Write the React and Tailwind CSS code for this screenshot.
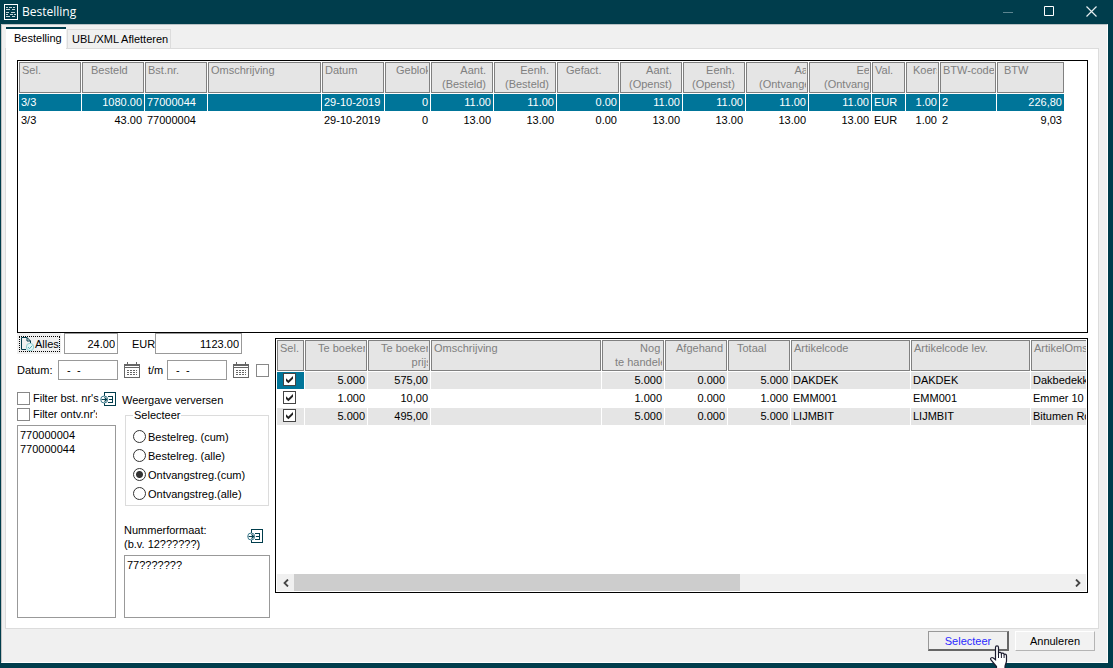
import clsx from 'clsx'

const orderColumns = [
  { key: 'sel', lines: ['Sel.'], width: 'w-[62px]', pad: 'pl-0.5' },
  { key: 'ordered', lines: ['Besteld'], width: 'w-[62px]', pad: 'pl-2', right: true },
  { key: 'number', lines: ['Bst.nr.'], width: 'w-[62px]', pad: 'pl-0.5' },
  { key: 'description', lines: ['Omschrijving'], width: 'w-[113px]', pad: 'pl-0.5' },
  { key: 'date', lines: ['Datum'], width: 'w-[62px]', pad: 'pl-0.5' },
  { key: 'blocked', lines: ['Geblok'], width: 'w-[45px]', pad: 'pl-2.5', right: true },
  { key: 'qtyOrdered', lines: ['Aant.', '(Besteld)'], width: 'w-[62px]', pad: 'pl-2.5', right: true },
  { key: 'unitOrdered', lines: ['Eenh.', '(Besteld)'], width: 'w-[62px]', pad: 'pl-2.5', right: true },
  { key: 'invoiced', lines: ['Gefact.'], width: 'w-[62px]', pad: 'pl-2', right: true },
  { key: 'qtyOpen', lines: ['Aant.', '(Openst)'], width: 'w-[62px]', pad: 'pl-2', right: true },
  { key: 'unitOpen', lines: ['Eenh.', '(Openst)'], width: 'w-[62px]', pad: 'pl-2', right: true },
  { key: 'qtyReceived', lines: ['Aant.', '(Ontvangen)'], width: 'w-[62px]', pad: 'pl-3', right: true },
  { key: 'unitReceived', lines: ['Eenh.', '(Ontvangen)'], width: 'w-[62px]', pad: 'pl-3.5', right: true },
  { key: 'currency', lines: ['Val.'], width: 'w-[33px]', pad: 'pl-0.5' },
  { key: 'rate', lines: ['Koers'], width: 'w-[33px]', pad: 'pl-1.5', right: true },
  { key: 'vatCode', lines: ['BTW-code'], width: 'w-[56px]', pad: 'pl-0.5' },
  { key: 'vat', lines: ['BTW'], width: 'w-[67px]', pad: 'pl-1.5', right: true },
]

const orders = [
  {
    sel: '3/3', ordered: '1080.00', number: '77000044', description: '', date: '29-10-2019', blocked: '0',
    qtyOrdered: '11.00', unitOrdered: '11.00', invoiced: '0.00', qtyOpen: '11.00', unitOpen: '11.00',
    qtyReceived: '11.00', unitReceived: '11.00', currency: 'EUR', rate: '1.00', vatCode: '2', vat: '226,80',
  },
  {
    sel: '3/3', ordered: '43.00', number: '77000004', description: '', date: '29-10-2019', blocked: '0',
    qtyOrdered: '13.00', unitOrdered: '13.00', invoiced: '0.00', qtyOpen: '13.00', unitOpen: '13.00',
    qtyReceived: '13.00', unitReceived: '13.00', currency: 'EUR', rate: '1.00', vatCode: '2', vat: '9,03',
  },
]

const lineColumns = [
  { key: 'sel', lines: ['Sel.'], width: 'w-[27px]', pad: 'pl-0.5' },
  { key: 'toBook', lines: ['Te boeken'], width: 'w-[62px]', pad: 'pl-3', right: true },
  { key: 'price', lines: ['Te boeken', 'prijs'], width: 'w-[62px]', pad: 'pl-3', right: true },
  { key: 'description', lines: ['Omschrijving'], width: 'w-[170px]', pad: 'pl-0.5' },
  { key: 'open', lines: ['Nog  ', 'te handele'], width: 'w-[62px]', pad: 'pl-3', right: true },
  { key: 'handled', lines: ['Afgehand'], width: 'w-[62px]', pad: 'pl-2.5', right: true },
  { key: 'total', lines: ['Totaal'], width: 'w-[62px]', pad: 'pl-2', right: true },
  { key: 'code', lines: ['Artikelcode'], width: 'w-[119px]', pad: 'pl-0.5' },
  { key: 'supplierCode', lines: ['Artikelcode lev.'], width: 'w-[119px]', pad: 'pl-0.5' },
  { key: 'name', lines: ['ArtikelOmschrijving'], width: 'w-[119px]', pad: 'pl-0.5' },
]

const orderLines = [
  { toBook: '5.000', price: '575,00', description: '', open: '5.000', handled: '0.000', total: '5.000', code: 'DAKDEK', supplierCode: 'DAKDEK', name: 'Dakbedekking' },
  { toBook: '1.000', price: '10,00', description: '', open: '1.000', handled: '0.000', total: '1.000', code: 'EMM001', supplierCode: 'EMM001', name: 'Emmer 10 L' },
  { toBook: '5.000', price: '495,00', description: '', open: '5.000', handled: '0.000', total: '5.000', code: 'LIJMBIT', supplierCode: 'LIJMBIT', name: 'Bitumen Rol' },
]

const viewModes = ['Bestelreg. (cum)', 'Bestelreg. (alle)', 'Ontvangstreg.(cum)', 'Ontvangstreg.(alle)']

const cellClass = 'h-[17px] overflow-hidden px-0.5 pt-px pb-0 align-top whitespace-nowrap'

function GridHead({ columns }) {
  return (
    <thead>
      <tr>
        {columns.map((col) => (
          <th
            key={col.key}
            className={clsx('h-[31px] overflow-hidden border border-[#808080] bg-[#e5e5e5] p-0 text-left align-top font-normal text-[#808080]', col.width)}
          >
            <div className="mr-px overflow-hidden">
              <div className={clsx('w-max whitespace-pre', col.right && 'text-right', col.pad)}>
                {col.lines.map((line) => (
                  <div key={line}>{line}</div>
                ))}
              </div>
            </div>
          </th>
        ))}
      </tr>
    </thead>
  )
}

function Checkbox({ className, ...props }) {
  return (
    <span className={clsx('relative block size-[13px] shrink-0', className)}>
      <input type="checkbox" className="peer block size-[13px] appearance-none border border-[#888] bg-white checked:border-[#444]" {...props} />
      <svg viewBox="0 0 13 13" className="pointer-events-none absolute inset-0 hidden size-[13px] peer-checked:block">
        <path d="M3 5.2 5.4 7.6 10 3v2.7L5.4 10.3 3 7.9z" fill="#222" />
      </svg>
    </span>
  )
}

function CalendarIcon() {
  return (
    <svg viewBox="0 0 16 16" className="size-4" fill="none" stroke="#666" shapeRendering="crispEdges">
      <path d="M.5 2.5h15v13H.5zM0 5.5h16M3.5 0v4M12.5 0v4M1 3.5h14" />
      <path d="M3 8.5h10M3 10.5h10M3 12.5h10" strokeDasharray="2 1" />
    </svg>
  )
}

function RefreshListIcon() {
  return (
    <svg viewBox="0 0 16 16" className="size-4" fill="none" stroke="#003d4c">
      <path d="M4 4V.5h11.5v13H4V11" shapeRendering="crispEdges" />
      <path d="M8 4.5h4.500v6H8M9 7.5h3.500" shapeRendering="crispEdges" />
      <circle cx="4.2" cy="7.5" r="3.5" fill="#fff" stroke="#39788a" />
      <path d="M1.5 7.5h5M4.5 5.3 6.7 7.5 4.5 9.7" strokeWidth="1.2" />
    </svg>
  )
}

function TitleBar() {
  return (
    <header className="flex h-6 items-center bg-[#003d4c] pl-1 text-white">
      <svg viewBox="0 0 14 16" className="h-4 w-3.5" fill="none" stroke="#fff" shapeRendering="crispEdges">
        <path d="M.5.5h13v15H.5z" />
        <path d="M2 3.5h2M5 3.5h3M9 3.5h2M2 5.5h4M8 5.5h3M2 8.5h3M7 8.5h4M2 10.5h2M6 10.5h3M10 10.5h2M2 12.5h4M8 12.5h3" stroke="#c5d5d9" />
      </svg>
      <h1 className="ml-1 flex-1 font-['Open_Sans',sans-serif] text-xs">Bestelling</h1>
      <button type="button" aria-label="Minimaliseren" className="flex h-5 w-[42px] justify-center">
        <svg viewBox="0 0 11 11" className="mt-1 size-[11px]" stroke="#5d8590"><path d="M0 6.5h10" /></svg>
      </button>
      <button type="button" aria-label="Maximaliseren" className="flex h-5 w-10 justify-center">
        <svg viewBox="0 0 11 11" className="mt-1 size-[11px]" fill="none" stroke="#fff"><path d="M.5.5h9v9h-9z" /></svg>
      </button>
      <button type="button" aria-label="Sluiten" className="flex h-5 w-11 justify-center">
        <svg viewBox="0 0 11 11" className="mt-1 size-[11px]" stroke="#e6eef0" strokeWidth="1.2"><path d="M.5.5l10 10M10.5.5l-10 10" /></svg>
      </button>
    </header>
  )
}

function OrderGrid() {
  return (
    <div className="h-[273px] overflow-hidden border border-black">
      <table className="w-0 table-fixed border-separate border-spacing-px">
        <GridHead columns={orderColumns} />
        <tbody>
          {orders.map((order, i) => (
            <tr key={order.number} className={i === 0 ? 'bg-[#007599] text-white' : 'bg-white'}>
              {orderColumns.map((col) => (
                <td key={col.key} className={clsx(cellClass, col.right && 'text-right')}>
                  {order[col.key]}
                </td>
              ))}
            </tr>
          ))}
        </tbody>
      </table>
    </div>
  )
}

function LineGrid() {
  return (
    <div className="mt-[5px] flex h-[255px] min-w-0 flex-1 flex-col border border-black pr-px pb-px">
      <div className="min-h-0 flex-1 overflow-hidden">
        <table className="w-0 table-fixed border-separate border-spacing-px">
          <GridHead columns={lineColumns} />
          <tbody>
            {orderLines.map((line, i) => (
              <tr key={line.code} className={i % 2 === 0 ? 'bg-[#e5e5e5]' : 'bg-white'}>
                <td className={clsx('h-[17px] px-1.5 pt-px pb-0 align-top', i === 0 && 'bg-[#007599]')}>
                  <Checkbox defaultChecked aria-label={`Selecteer ${line.code}`} />
                </td>
                {lineColumns.slice(1).map((col) => (
                  <td key={col.key} className={clsx(cellClass, col.right && 'text-right')}>
                    {line[col.key]}
                  </td>
                ))}
              </tr>
            ))}
          </tbody>
        </table>
      </div>
      <div className="ml-px flex h-[17px] bg-[#f0f0f0]">
        <button type="button" aria-label="Naar links" className="flex w-[17px] items-center justify-center">
          <svg viewBox="0 0 8 8" className="size-2" fill="none" stroke="#444" strokeWidth="1.8"><path d="M6 .5 2.5 4 6 7.5" /></svg>
        </button>
        <div className="flex-1">
          <div className="h-full w-[57.5%] bg-[#cdcdcd]" />
        </div>
        <button type="button" aria-label="Naar rechts" className="flex w-[17px] items-center justify-center">
          <svg viewBox="0 0 8 8" className="size-2" fill="none" stroke="#444" strokeWidth="1.8"><path d="M2 .5 5.5 4 2 7.5" /></svg>
        </button>
      </div>
    </div>
  )
}

function FilterPanel() {
  return (
    <div className="w-[258px] shrink-0">
      <div className="flex h-[21px] items-center">
        <button type="button" className="flex h-[21px] w-11 items-center overflow-hidden bg-[#f0f0f0] pl-0.5">
          <span className="flex h-4 w-[41px] items-center border border-dotted border-black">
            <svg viewBox="0 0 15 16" className="h-4 w-[15px] shrink-0" fill="none" stroke="#003d4c">
              <path d="M6 13.5H1.5V1.5H7L10.5 5v2M7 1.5V5h3.5" />
              <circle cx="10" cy="11" r="3.7" fill="#e4f5f5" stroke="#8fcfd2" />
              <path d="M8 11l1.500 1.700 2.700-3" stroke="#4fb0b6" />
            </svg>
            Alles
          </span>
        </button>
        <input type="text" aria-label="Aantal" defaultValue="24.00" className="ml-[3px] h-[21px] w-[54px] border border-[#999] bg-white px-0.5 text-right" />
        <label htmlFor="amount" className="ml-3.5 w-[23px]">EUR</label>
        <input id="amount" type="text" defaultValue="1123.00" className="h-[21px] w-[87px] border border-[#999] bg-white px-0.5 text-right" />
      </div>

      <div className="mt-1.5 flex h-5 items-center">
        <label htmlFor="date-from" className="w-[41px]">Datum:</label>
        <input id="date-from" type="text" defaultValue="  -  -" className="h-5 w-[60px] border border-[#999] bg-white px-0.5" />
        <button type="button" aria-label="Kies begindatum" className="ml-1.5"><CalendarIcon /></button>
        <label htmlFor="date-to" className="ml-2 w-[19px]">t/m</label>
        <input id="date-to" type="text" defaultValue="  -  -" className="h-5 w-[60px] border border-[#999] bg-white px-0.5" />
        <button type="button" aria-label="Kies einddatum" className="ml-1.5"><CalendarIcon /></button>
        <Checkbox className="ml-[7px]" aria-label="Datumfilter" />
      </div>

      <div className="mt-3 flex h-4 items-start">
        <label className="flex w-[83px] items-center gap-[3px] leading-[13px] whitespace-nowrap">
          <Checkbox />
          Filter bst. nr's
        </label>
        <button type="button" id="refresh" aria-label="Weergave verversen"><RefreshListIcon /></button>
        <label htmlFor="refresh" className="ml-1.5 leading-4 whitespace-nowrap">Weergave verversen</label>
      </div>

      <div className="flex gap-2">
        <div className="flex w-[99px] flex-col">
          <label className="flex w-20 items-center gap-[3px] overflow-hidden leading-[13px] whitespace-nowrap">
            <Checkbox />
            Filter ontv.nr's
          </label>
          <ul className="mt-1 flex-1 border border-[#999] bg-white px-0.5 pt-0.5">
            <li>770000004</li>
            <li>770000044</li>
          </ul>
        </div>
        <div className="w-[146px]">
          <fieldset className="mx-px border border-[#dcdcdc] pb-0.5 pl-[7px]">
            <legend className="px-px">Selecteer</legend>
            <div className="pt-[5px]">
              {viewModes.map((mode, i) => (
                <label key={mode} className="flex h-[19px] items-center gap-0.5 whitespace-nowrap">
                  <input
                    type="radio"
                    name="view-mode"
                    defaultChecked={i === 2}
                    className="size-[13px] appearance-none rounded-full border border-[#333] bg-white checked:bg-[radial-gradient(circle,#333_0_3px,transparent_4px)]"
                  />
                  {mode}
                </label>
              ))}
            </div>
          </fieldset>
          <div className="mt-[17px] flex items-center justify-between pr-[7px]">
            <label htmlFor="number-format">
              Nummerformaat:
              <br />
              (b.v. 12??????)
            </label>
            <button type="button" aria-label="Nummerformaat toepassen"><RefreshListIcon /></button>
          </div>
          <textarea id="number-format" defaultValue="77???????" className="mt-1 block h-[63px] w-full resize-none border border-[#999] bg-white px-0.5 pt-0.5" />
        </div>
      </div>
    </div>
  )
}

function HandCursor() {
  return (
    <svg viewBox="0 0 20 24" className="pointer-events-none absolute top-[14px] left-[61px] h-6 w-5">
      <path
        d="M6.5 2.5c0-2.2 3-2.2 3 0V8c.8-1.2 2.7-.8 2.9.6.9-1 2.5-.5 2.7.8 1-.7 2.4 0 2.4 1.5V16c0 2-1.5 3.500-1.5 5.500V24H7.5v-2.500L2 15c-1.200-1.800.8-3.200 2.300-2l2.200 1.800z"
        fill="#fff"
        stroke="#1a1a2e"
        strokeWidth="1.2"
      />
      <path d="M9.5 8v5M12.4 9v4M15.1 10v3" stroke="#1a1a2e" />
    </svg>
  )
}

export default function App() {
  return (
    <div className="flex min-h-screen flex-col overflow-hidden bg-[#003d4c] font-['Liberation_Sans',Arial,sans-serif] text-[11px] leading-[14px] text-black">
      <TitleBar />
      <main className="mr-[5px] mb-[5px] ml-px flex-1 border border-t-[#b9c2c5] border-r-white border-b-white border-l-[#c4c4c4] bg-[#f0f0f0] pr-2 pl-[3px]">
        <nav className="relative flex h-[23px] items-start pt-0.5 pl-px">
          <button type="button" className="-mb-px h-[23px] w-[60px] border-t-2 border-[#003d4c] bg-white pb-1 pl-2 text-left whitespace-nowrap">
            Bestelling
          </button>
          <button type="button" className="mt-0.5 ml-px h-[19px] w-[104px] border border-b-0 border-[#dcdcdc] pl-1 text-left whitespace-nowrap">
            UBL/XML Afletteren
          </button>
        </nav>
        <section className="border border-[#dcdcdc] bg-white pt-[11px] pr-2.5 pb-2.5 pl-[11px]">
          <OrderGrid />
          <div className="flex items-start">
            <FilterPanel />
            <LineGrid />
          </div>
        </section>
        <footer className="flex justify-end gap-1.5 pt-0.5 pr-1">
          <div className="relative">
            <button type="button" className="h-5 w-[81px] border border-r-2 border-b-2 border-[#999] border-r-[#666] border-b-[#666] bg-[#f0f0f0] text-[#2a2aff]">
              Selecteer
            </button>
            <HandCursor />
          </div>
          <button type="button" className="h-5 w-20 border border-t-white border-r-[#b4b4b4] border-b-[#b4b4b4] border-l-white bg-[#f2f2f2]">
            Annuleren
          </button>
        </footer>
      </main>
    </div>
  )
}
